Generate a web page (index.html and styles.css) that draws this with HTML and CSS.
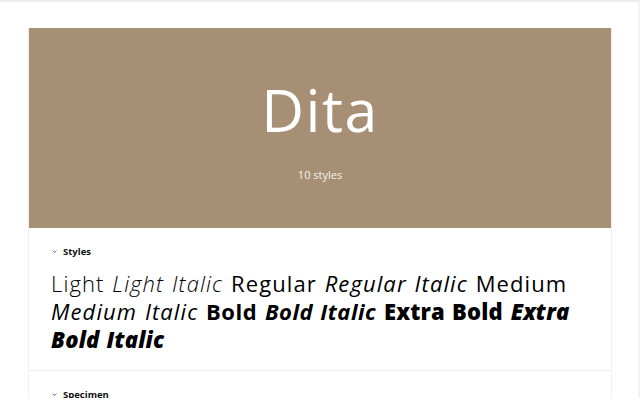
FILE: index.html
```html
<!DOCTYPE html>
<html>
<head>
<meta charset="utf-8">
<link rel="stylesheet" href="styles.css">
</head>
<body>
<div class="page">
  <div class="card">
    <div class="banner">
      <h1 class="title">Dita</h1>
      <div class="count">10 styles</div>
    </div>
    <section class="section">
      <div class="sec-head"><svg class="chev" viewBox="0 0 8 8" width="5" height="5"><path d="M1 2.5 L4 5.5 L7 2.5" fill="none" stroke="#333" stroke-width="1.2"/></svg><span>Styles</span></div>
      <p class="samples"><span class="w300">Light</span> <span class="w300 it">Light Italic</span> <span class="w400">Regular</span> <span class="w400 it">Regular Italic</span> <span class="w500">Medium</span> <span class="w500 it">Medium Italic</span> <span class="w700">Bold</span> <span class="w700 it">Bold Italic</span> <span class="w800">Extra Bold</span> <span class="w800 it">Extra Bold Italic</span></p>
    </section>
    <section class="section">
      <div class="sec-head"><svg class="chev" viewBox="0 0 8 8" width="5" height="5"><path d="M1 2.5 L4 5.5 L7 2.5" fill="none" stroke="#333" stroke-width="1.2"/></svg><span>Specimen</span></div>
    </section>
  </div>
</div>
</body>
</html>
```
FILE: styles.css
```css
html, body { margin: 0; padding: 0; background: #fff; }
body { font-family: "Open Sans", "Noto Sans", sans-serif; color: #111; border-top: 2px solid #ececec; border-right: 2px solid #f3f3f3; height: 398px; box-sizing: border-box; overflow: hidden; }
.page { padding: 26px 26px 0 28px; }
.card { width: 584px; border-left: 1px solid #f0f0f0; border-right: 1px solid #f0f0f0; box-sizing: border-box; }
.banner { background: #a68f75; height: 200px; display: flex; flex-direction: column; align-items: center; color: #fff; }
.title { margin: 0; padding-top: 52px; font-size: 59px; font-weight: 400; line-height: 1; letter-spacing: 1.5px; }
.count { margin-top: 28px; font-size: 11px; color: #f6f2ec; }
.section { padding: 16px 20px 0 23px; border-bottom: 1px solid #ececec; }
.sec-head { display: flex; align-items: center; gap: 6px; font-size: 9.5px; font-weight: 700; color: #111; height: 14px; }
.chev { display: block; }
.samples { margin: 11px 0 17px -1px; font-size: 22px; line-height: 28px; color: #000; letter-spacing: 1.1px; word-spacing: 1px; }
.w300 { font-weight: 300; }
.w400 { font-weight: 400; }
.w500 { font-weight: 500; }
.w700 { font-weight: 700; letter-spacing: 0.5px; }
.w800 { font-weight: 800; letter-spacing: 0.2px; }
.it { font-style: italic; }
```
